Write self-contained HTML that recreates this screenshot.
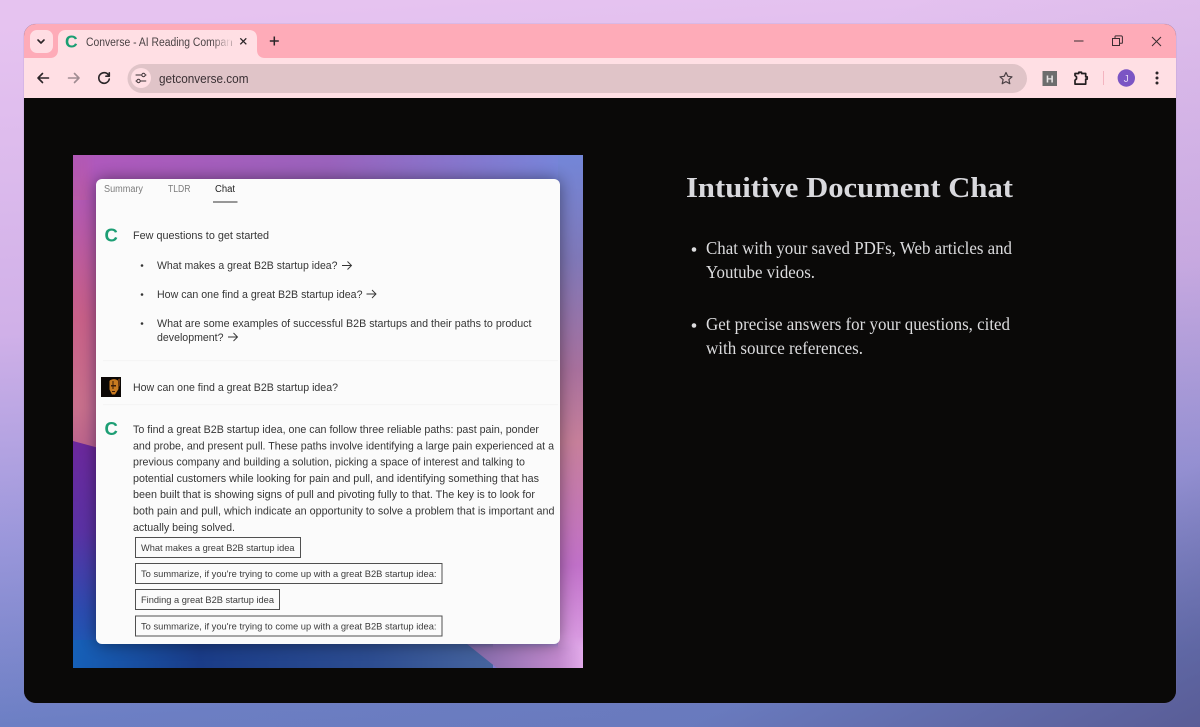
<!DOCTYPE html>
<html><head><meta charset="utf-8"><title>Converse - AI Reading Companion</title>
<style>
html,body{margin:0;padding:0;width:1200px;height:727px;overflow:hidden;background:#b9a5e0}
svg{display:block}
text{font-family:"Liberation Sans",Arial,sans-serif;white-space:pre}
.b{font-size:11px;fill:#363636}
.s{font-size:9.4px;fill:#3c3c3c}
.r{font-family:"Liberation Serif","Noto Serif CJK SC",serif;font-size:18px;fill:#dcdcde}
.box{fill:#fbfbfb;stroke:#505050;stroke-width:1}
.ar{fill:none;stroke:#333;stroke-width:.9}
.ic{fill:none;stroke:#2b2528;stroke-width:1.6;stroke-linecap:round;stroke-linejoin:round}
</style></head>
<body>
<svg width="1200" height="727" viewBox="0 0 1200 727" xmlns="http://www.w3.org/2000/svg">
<defs>
<linearGradient id="bg" x1="0.35" y1="0" x2="0.45" y2="1"><stop offset="0" stop-color="#e6c3f0"/><stop offset=".42" stop-color="#d0b0e8"/><stop offset=".7" stop-color="#9c98dc"/><stop offset=".95" stop-color="#6e82c8"/><stop offset="1" stop-color="#6c80c6"/></linearGradient>
<linearGradient id="bgr" x1="0.4" y1="0.3" x2="1" y2="1"><stop offset="0" stop-color="#4a4070" stop-opacity="0"/><stop offset=".7" stop-color="#4a4070" stop-opacity=".1"/><stop offset="1" stop-color="#4a4070" stop-opacity=".55"/></linearGradient>
<linearGradient id="top" x1="0" y1="0" x2="1" y2="0"><stop offset="0" stop-color="#b058bc"/><stop offset=".5" stop-color="#9a62bc"/><stop offset="1" stop-color="#7388dc"/></linearGradient>
<linearGradient id="left" x1="0" y1="0" x2="0" y2="1"><stop offset="0" stop-color="#b058b8"/><stop offset=".45" stop-color="#c85f88"/><stop offset=".8" stop-color="#c8708c"/><stop offset="1" stop-color="#b8608c"/></linearGradient>
<linearGradient id="low" x1="0" y1="0" x2="0" y2="1"><stop offset="0" stop-color="#6c289c"/><stop offset=".4" stop-color="#5a32a4"/><stop offset=".75" stop-color="#2c4cb0"/><stop offset="1" stop-color="#1660b8"/></linearGradient>
<linearGradient id="bot" x1="0" y1="0" x2="1" y2="0"><stop offset="0" stop-color="#1660b8"/><stop offset=".3" stop-color="#1a3c88"/><stop offset=".7" stop-color="#2c4c90"/><stop offset="1" stop-color="#46649e"/></linearGradient>
<linearGradient id="right" x1="0" y1="0" x2="0" y2="1"><stop offset="0" stop-color="#7386d8"/><stop offset=".2" stop-color="#7f78b8"/><stop offset=".42" stop-color="#a8709c"/><stop offset=".56" stop-color="#c67f9a"/><stop offset=".8" stop-color="#c070c8"/><stop offset="1" stop-color="#e2aaea"/></linearGradient>
<linearGradient id="tri" x1="0" y1="0" x2="1" y2="0"><stop offset="0" stop-color="#7a66a4"/><stop offset=".79" stop-color="#c088cc"/><stop offset="1" stop-color="#e2aaea"/></linearGradient>
<linearGradient id="tfade" gradientUnits="userSpaceOnUse" x1="0" y1="636" x2="0" y2="648"><stop offset="0" stop-color="#fff" stop-opacity="0"/><stop offset="1" stop-color="#fff" stop-opacity="1"/></linearGradient>
<mask id="tmask" maskUnits="userSpaceOnUse" x="450" y="630" width="140" height="45"><rect x="450" y="630" width="140" height="45" fill="url(#tfade)"/></mask>
<linearGradient id="fade" x1="0" y1="0" x2="1" y2="0"><stop offset="0" stop-color="#ffdfe4" stop-opacity="0"/><stop offset="1" stop-color="#ffdfe4"/></linearGradient>
<clipPath id="win"><rect x="24" y="24" width="1152" height="679" rx="12"/></clipPath>
<clipPath id="img"><rect x="73" y="155" width="510" height="513"/></clipPath>
<filter id="sh" x="-20%" y="-20%" width="140%" height="140%"><feGaussianBlur stdDeviation="8"/></filter>
<filter id="bl" x="-20%" y="-20%" width="140%" height="140%"><feGaussianBlur stdDeviation="4"/></filter>
</defs>

<rect width="1200" height="727" fill="url(#bg)"/>
<rect width="1200" height="727" fill="url(#bgr)"/>

<rect x="24" y="24" width="1152" height="679" rx="12" fill="#0a0908" stroke="#8f7fb0" stroke-opacity=".35" stroke-width=".8"/>
<g clip-path="url(#win)">
<rect x="24" y="24" width="1152" height="35" fill="#feabb8"/>
<rect x="24" y="58" width="1152" height="40" fill="#ffdfe4"/>
<rect x="24" y="98" width="1152" height="606" fill="#0a0908"/>
</g>

<!-- tab strip -->
<rect x="30" y="30" width="23" height="23" rx="7" fill="#ffdde3"/>
<path d="M38 40l3 3 3-3" fill="none" stroke="#2b2528" stroke-width="1.600" stroke-linecap="round" stroke-linejoin="round"/>
<path d="M50 58c5 0 8-3 8-8V38c0-5 3-8 8-8h183c5 0 8 3 8 8v12c0 5 3 8 8 8z" fill="#ffdfe4"/>
<text x="65" y="47.500" font-size="17.500" font-weight="700" fill="#1a9e72">C</text>
<text x="86" y="46" font-size="11.500" fill="#4a4244" textLength="146" lengthAdjust="spacingAndGlyphs">Converse - AI Reading Compan</text>
<rect x="212" y="33" width="19" height="18" fill="url(#fade)"/>
<path d="M240.300 38.300l6 6M246.300 38.300l-6 6" stroke="#2b2528" stroke-width="1.300" fill="none"/>
<path d="M274.300 36.500v9M269.800 41h9" stroke="#2b2528" stroke-width="1.500" fill="none"/>
<path d="M1074 41h9.500" stroke="#3a2c30" stroke-width="1"/>
<path d="M1112.500 38.500h7v7h-7zM1115 38.500v-1.800a.8.800 0 0 1 .8-.8h5.400a1.200 1.200 0 0 1 1.200 1.200v5.400a.8.800 0 0 1-.8.800h-1.800" fill="none" stroke="#3a2c30" stroke-width="1"/>
<path d="M1152 37l9 9M1161 37l-9 9" stroke="#3a2c30" stroke-width="1" fill="none"/>

<!-- toolbar -->
<path d="M38 78h10.500M38 78l4.500-4.500M38 78l4.500 4.500" class="ic"/>
<path d="M79 78H68.500M79 78l-4.500-4.500M79 78l-4.500 4.500" class="ic" style="stroke:#a08c92"/>
<path d="M108.800 75.500a5.300 5.300 0 1 0 .5 3.500M109.300 72.800v3.400h-3.400" class="ic"/>
<rect x="127.500" y="64" width="899.500" height="29" rx="14.500" fill="#e0c4c8"/>
<circle cx="141" cy="78" r="10" fill="#ffdfe4"/>
<path d="M136 75h5M145.500 75h.5M136 81h.5M140.800 81h5" stroke="#3a3034" stroke-width="1.100" fill="none" stroke-linecap="round"/>
<circle cx="143.500" cy="75" r="1.700" fill="none" stroke="#3a3034" stroke-width="1"/>
<circle cx="138.500" cy="81" r="1.700" fill="none" stroke="#3a3034" stroke-width="1"/>
<text x="159" y="83" font-size="13" fill="#3a3034" textLength="89.500" lengthAdjust="spacingAndGlyphs">getconverse.com</text>
<path d="M1006 72.500l1.800 3.800 4.200.5-3.100 2.800.9 4.100-3.800-2.100-3.800 2.100.9-4.100-3.100-2.800 4.200-.5z" fill="none" stroke="#4a4044" stroke-width="1.200" stroke-linejoin="round"/>
<rect x="1042.500" y="71" width="14.500" height="15" fill="#6d6d6d"/>
<text x="1046" y="82.500" font-size="10.500" font-weight="700" fill="#e8e4e4">H</text>
<path d="M1075 73.500h3.800v-1.300h2.700v1.300h4.200v3.400h1.500v2.200h-1.500v5h-10.700v-3.800l1.500-1.400v-2l-1.500-1.400z" fill="none" stroke="#231e20" stroke-width="1.700" stroke-linejoin="round"/>
<rect x="1103" y="71" width="1" height="14" fill="#f4b4c0"/>
<circle cx="1126.300" cy="78" r="8.700" fill="#7b55c4"/>
<text x="1123.700" y="81.800" font-size="10" fill="#e4d8f4">J</text>
<circle cx="1157" cy="73" r="1.500" fill="#2b2528"/><circle cx="1157" cy="78" r="1.500" fill="#2b2528"/><circle cx="1157" cy="83" r="1.500" fill="#2b2528"/>

<!-- image -->
<g clip-path="url(#img)">
<rect x="73" y="155" width="510" height="513" fill="url(#top)"/>
<g filter="url(#bl)">
<rect x="60" y="150" width="30" height="310" fill="url(#left)"/>
</g>
<rect x="73" y="200" width="23" height="260" fill="url(#left)" opacity=".75"/>
<path d="M73 441L110 451L110 668L73 668Z" fill="url(#low)"/>
<rect x="73" y="640" width="420" height="30" fill="url(#bot)"/>
<rect x="558" y="155" width="25" height="513" fill="url(#right)"/>
<path d="M462 640L497 668H583V636H462Z" fill="url(#tri)" mask="url(#tmask)"/>
<rect x="96" y="179" width="464" height="465" rx="6" fill="#000" opacity=".45" filter="url(#sh)"/>
</g>

<!-- card -->
<rect x="96" y="179" width="464" height="465" rx="6" fill="#fbfbfb"/>
<text x="104" y="192" font-size="10" fill="#7c7c7c" textLength="39" lengthAdjust="spacingAndGlyphs">Summary</text>
<text x="168" y="192" font-size="10" fill="#7c7c7c" textLength="22.500" lengthAdjust="spacingAndGlyphs">TLDR</text>
<text x="215" y="192" font-size="10" fill="#222" textLength="20" lengthAdjust="spacingAndGlyphs">Chat</text>
<rect x="213" y="201.500" width="24.500" height="1" fill="#333"/>

<text x="104.500" y="241.500" font-size="18.500" font-weight="700" fill="#1d9e74">C</text>
<text x="133" y="239" class="b" textLength="136" lengthAdjust="spacingAndGlyphs">Few questions to get started</text>

<circle cx="142" cy="265.500" r="1.300" fill="#333"/><circle cx="142" cy="294.500" r="1.300" fill="#333"/><circle cx="142" cy="323.500" r="1.300" fill="#333"/>
<text x="157" y="269" class="b" textLength="180.500" lengthAdjust="spacingAndGlyphs">What makes a great B2B startup idea?</text>
<path d="M342 265.500h9.500M347.500 261.500l4 4-4 4" class="ar"/>
<text x="157" y="298" class="b" textLength="205.500" lengthAdjust="spacingAndGlyphs">How can one find a great B2B startup idea?</text>
<path d="M366.500 294h9.500M372 290l4 4-4 4" class="ar"/>
<text x="157" y="327" class="b" textLength="374.500" lengthAdjust="spacingAndGlyphs">What are some examples of successful B2B startups and their paths to product</text>
<text x="157" y="341" class="b" textLength="66.500" lengthAdjust="spacingAndGlyphs">development?</text>
<path d="M228 337h9.500M233.500 333l4 4-4 4" class="ar"/>

<rect x="103" y="360" width="455" height="1.200" fill="#f5f5f5"/>

<rect x="101" y="377" width="20" height="20" fill="#0c0806"/>
<path d="M109.500 381c2-2.500 7-2.500 8.500 0l.5 8-3.500 5.500h-3l-2.500-5z" fill="#c87a20"/>
<path d="M111 385h5v1.500h-5zM112.500 381h1v8h-1zM112 391h3v1h-3z" fill="#3a1c08"/>
<path d="M118 379l2-.5v7l-1.500 2z" fill="#6a3a14"/>
<text x="133" y="391" class="b" textLength="205" lengthAdjust="spacingAndGlyphs">How can one find a great B2B startup idea?</text>

<rect x="103" y="404" width="455" height="1.200" fill="#f5f5f5"/>

<text x="104.500" y="434.800" font-size="18.500" font-weight="700" fill="#1d9e74">C</text>
<text x="133" y="433" class="b" textLength="406" lengthAdjust="spacingAndGlyphs">To find a great B2B startup idea, one can follow three reliable paths: past pain, ponder</text>
<text x="133" y="449.300" class="b" textLength="421" lengthAdjust="spacingAndGlyphs">and probe, and present pull. These paths involve identifying a large pain experienced at a</text>
<text x="133" y="465.600" class="b" textLength="392" lengthAdjust="spacingAndGlyphs">previous company and building a solution, picking a space of interest and talking to</text>
<text x="133" y="481.900" class="b" textLength="406" lengthAdjust="spacingAndGlyphs">potential customers while looking for pain and pull, and identifying something that has</text>
<text x="133" y="498.200" class="b" textLength="402" lengthAdjust="spacingAndGlyphs">been built that is showing signs of pull and pivoting fully to that. The key is to look for</text>
<text x="133" y="514.500" class="b" textLength="421.500" lengthAdjust="spacingAndGlyphs">both pain and pull, which indicate an opportunity to solve a problem that is important and</text>
<text x="133" y="530.800" class="b" textLength="102" lengthAdjust="spacingAndGlyphs">actually being solved.</text>

<rect class="box" x="135.500" y="537.500" width="165" height="20"/>
<text x="141" y="551" class="s" textLength="153.500" lengthAdjust="spacingAndGlyphs">What makes a great B2B startup idea</text>
<rect class="box" x="135.500" y="563.500" width="306.500" height="20"/>
<text x="141" y="577" class="s" textLength="295.500" lengthAdjust="spacingAndGlyphs">To summarize, if you're trying to come up with a great B2B startup idea:</text>
<rect class="box" x="135.500" y="589.500" width="144" height="20"/>
<text x="141" y="603" class="s" textLength="133" lengthAdjust="spacingAndGlyphs">Finding a great B2B startup idea</text>
<rect class="box" x="135.500" y="616" width="306.500" height="20"/>
<text x="141" y="629.500" class="s" textLength="295.500" lengthAdjust="spacingAndGlyphs">To summarize, if you're trying to come up with a great B2B startup idea:</text>

<!-- right column -->
<text x="686" y="197" style="font-family:'Liberation Serif',serif" font-size="28" font-weight="700" fill="#d9d9dd" textLength="327" lengthAdjust="spacingAndGlyphs">Intuitive Document Chat</text>
<circle cx="694" cy="249.500" r="2.300" fill="#dcdcde"/>
<text x="706" y="254" class="r" textLength="306" lengthAdjust="spacingAndGlyphs">Chat with your saved PDFs, Web articles and</text>
<text x="706" y="278" class="r" textLength="109" lengthAdjust="spacingAndGlyphs">Youtube videos.</text>
<circle cx="694" cy="325.500" r="2.300" fill="#dcdcde"/>
<text x="706" y="330" class="r" textLength="304" lengthAdjust="spacingAndGlyphs">Get precise answers for your questions, cited</text>
<text x="706" y="354" class="r" textLength="157" lengthAdjust="spacingAndGlyphs">with source references.</text>
</svg>
</body></html>
